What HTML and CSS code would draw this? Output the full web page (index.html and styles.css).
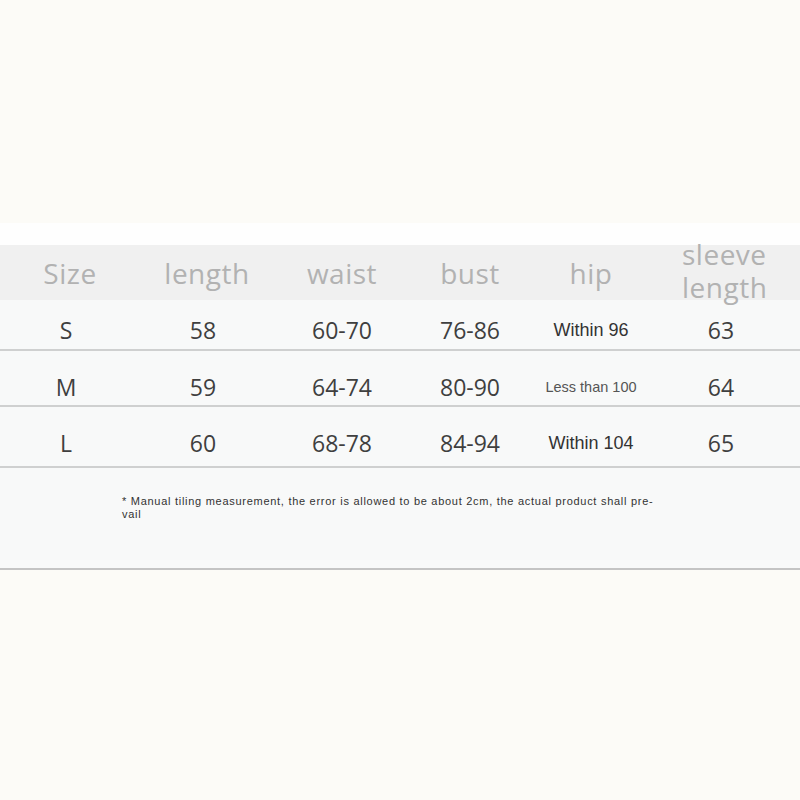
FILE: index.html
```html
<!DOCTYPE html>
<html lang="en">
<head>
<meta charset="utf-8">
<title>Size chart</title>
<link rel="stylesheet" href="styles.css">
</head>
<body>
<div class="card">
  <div class="row head">
    <div class="cell">Size</div>
    <div class="cell">length</div>
    <div class="cell">waist</div>
    <div class="cell">bust</div>
    <div class="cell">hip</div>
    <div class="cell two"><span class="ln1">sleeve</span><span class="ln2">length</span></div>
  </div>
  <div class="row body r1">
    <div class="cell sz">S</div>
    <div class="cell ln">58</div>
    <div class="cell">60-70</div>
    <div class="cell">76-86</div>
    <div class="cell hip">Within 96</div>
    <div class="cell sl">63</div>
  </div>
  <div class="row body r2">
    <div class="cell sz">M</div>
    <div class="cell ln">59</div>
    <div class="cell">64-74</div>
    <div class="cell">80-90</div>
    <div class="cell hip small">Less than 100</div>
    <div class="cell sl">64</div>
  </div>
  <div class="row body r3">
    <div class="cell sz">L</div>
    <div class="cell ln">60</div>
    <div class="cell">68-78</div>
    <div class="cell">84-94</div>
    <div class="cell hip">Within 104</div>
    <div class="cell sl">65</div>
  </div>
  <div class="note">
    <p>* Manual tiling measurement, the error is allowed to be about 2cm, the actual product shall pre-<br>vail</p>
  </div>
</div>
</body>
</html>
```
FILE: styles.css
```css
html, body {
  margin: 0;
  padding: 0;
  background: #fcfbf7;
}
body {
  padding-top: 223px;
  font-family: "Open Sans", "Noto Sans", sans-serif;
}
.card {
  background: #f8f9f9;
  box-shadow: 0 2px 2px rgba(0, 0, 0, 0.3);
  border-bottom: 2px solid #c4c4c4;
}
.row {
  display: grid;
  grid-template-columns: 140px 134px 136px 120px 122px 148px;
}
.cell {
  text-align: center;
  white-space: nowrap;
}
.head {
  height: 77px;
  box-sizing: border-box;
  align-items: start;
  background: linear-gradient(#fefefe 0, #fefefe 22px, #f0f0f0 22px, #f0f0f0 100%);
}
.head .cell {
  font-size: 28px;
  letter-spacing: 0.5px;
  color: #b2b2b2;
  line-height: 34px;
  padding-top: 33px;
}
.head .cell.two {
  padding-top: 15px;
  line-height: 33px;
  text-align: left;
  padding-left: 30px;
  display: flex;
  flex-direction: column;
}
.ln1, .ln2 {
  display: block;
  height: 33px;
}
.body {
  border-bottom: 2px solid #cfd0d0;
  align-items: center;
}
.body .cell {
  font-size: 23px;
  line-height: 24px;
  color: #3f3f3f;
}
.body .cell.sz {
  padding-right: 8px;
}
.body .cell.ln {
  padding-right: 8px;
}
.body .cell.sl {
  padding-right: 10px;
}
.r1 { padding: 18px 0 7px; }
.r2 { padding: 24px 0 6px; }
.r3 { padding: 24px 0 11px; }
.body .cell.hip {
  font-family: "Liberation Sans", Arial, sans-serif;
  font-size: 18px;
  color: #333;
}
.body .cell.hip.small {
  font-size: 14.5px;
  color: #555;
}
.note {
  height: 100px;
  padding-left: 122px;
  box-sizing: border-box;
  padding-top: 27px;
}
.note p {
  margin: 0;
  font-family: "Liberation Sans", Arial, sans-serif;
  font-size: 11px;
  letter-spacing: 0.72px;
  line-height: 13px;
  color: #333;
}
```
